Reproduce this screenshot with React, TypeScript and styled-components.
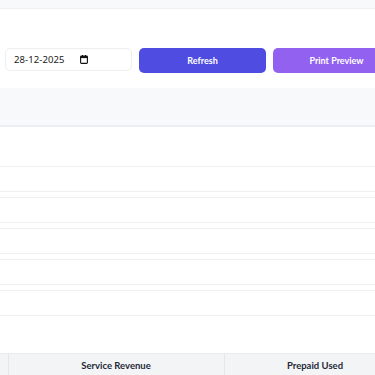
import { createGlobalStyle, styled } from 'styled-components';

const GlobalStyle = createGlobalStyle`
  html, body {
    margin: 0;
    padding: 0;
    background: #f8f9fb;
    font-family: Lato, "Noto Sans", sans-serif;
    overflow: hidden;
  }
`;

const rows = [0, 1, 2, 3, 4];
const columns = [
  { label: '', width: 8 },
  { label: 'Service Revenue', width: 216 },
  { label: 'Prepaid Used', width: 182 },
];

const CalendarIcon = () => (
  <svg width="8" height="9" viewBox="0 0 8 9">
    <rect x="0.6" y="1.1" width="6.8" height="7.3" rx="0.8" fill="none" stroke="#111" strokeWidth="1.1" />
    <rect x="0.6" y="1.1" width="6.8" height="2" fill="#111" />
    <rect x="2" y="0" width="1" height="1.6" fill="#111" />
    <rect x="5" y="0" width="1" height="1.6" fill="#111" />
  </svg>
);

const App = () => {
  return (
    <>
      <GlobalStyle />
      <Page>
        <Toolbar>
          <Controls>
            <DateField>
              <DateText>28-12-2025</DateText>
              <CalendarIcon />
            </DateField>
            <ActionButton $tone="indigo">Refresh</ActionButton>
            <ActionButton $tone="violet">Print Preview</ActionButton>
          </Controls>
        </Toolbar>
        <Band />
        <Sheet>
          <RowList>
            {rows.map((r) => (
              <SheetRow key={r} />
            ))}
          </RowList>
          <Table>
            <colgroup>
              {columns.map((c, i) => (
                <col key={i} style={{ width: c.width }} />
              ))}
            </colgroup>
            <thead>
              <tr>
                {columns.map((c, i) => (
                  <HeadCell key={i}>{c.label}</HeadCell>
                ))}
              </tr>
            </thead>
          </Table>
        </Sheet>
      </Page>
    </>
  );
};

export default App;

const Page = styled.div`
  width: 375px;
  height: 375px;
  padding-top: 8px;
  box-sizing: border-box;
  display: flex;
  flex-direction: column;
  overflow: hidden;
`;

const Toolbar = styled.div`
  height: 80px;
  background: #ffffff;
  border-top: 1px solid #eef0f3;
  box-shadow: 0 1px 2px rgba(0, 0, 0, 0.08);
  box-sizing: border-box;
  padding: 39px 0 0 5px;
  flex-shrink: 0;
`;

const Controls = styled.div`
  display: grid;
  grid-template-columns: 127px 127px 127px;
  gap: 7px;
  align-items: start;
`;

const DateField = styled.div`
  height: 23px;
  width: 127px;
  box-sizing: border-box;
  border: 1px solid #eceef2;
  border-radius: 5px;
  background: #ffffff;
  padding: 0 0 0 8px;
  display: flex;
  align-items: center;
  gap: 15px;
`;

const DateText = styled.span`
  font-family: "Noto Sans", Lato, sans-serif;
  font-size: 9.5px;
  color: #222;
  letter-spacing: 0.1px;
`;

const ActionButton = styled.button<{ $tone: 'indigo' | 'violet' }>`
  height: 25px;
  border: none;
  border-radius: 5px;
  background: ${(p) => (p.$tone === 'indigo' ? '#4f4ce1' : '#9261ef')};
  color: #ffffff;
  font-family: Lato, "Noto Sans", sans-serif;
  font-weight: 700;
  font-size: 9px;
  padding: 0;
`;

const Band = styled.div`
  height: 37px;
  background: #f8f9fb;
  border-bottom: 2px solid #eceef1;
  flex-shrink: 0;
`;

const Sheet = styled.div`
  flex: 1;
  background: #ffffff;
  padding-top: 39px;
  display: flex;
  flex-direction: column;
  align-items: flex-start;
`;

const RowList = styled.div`
  align-self: stretch;
  display: flex;
  flex-direction: column;
  gap: 5px;
`;

const SheetRow = styled.div`
  height: 24px;
  border-top: 1px solid #efefef;
  border-bottom: 1px solid #efefef;
`;

const Table = styled.table`
  margin-top: 37px;
  width: 406px;
  min-width: 406px;
  border-collapse: collapse;
  table-layout: fixed;
  flex-shrink: 0;
`;

const HeadCell = styled.th`
  height: 30px;
  padding: 6px 0 0;
  line-height: 12px;
  box-sizing: border-box;
  background: #f3f4f6;
  border-top: 1px solid #e9ebee;
  border-right: 1px solid #e5e7eb;
  color: #1f2937;
  font-family: Lato, "Noto Sans", sans-serif;
  font-weight: 700;
  font-size: 9.5px;
  text-align: center;
  vertical-align: top;
`;
